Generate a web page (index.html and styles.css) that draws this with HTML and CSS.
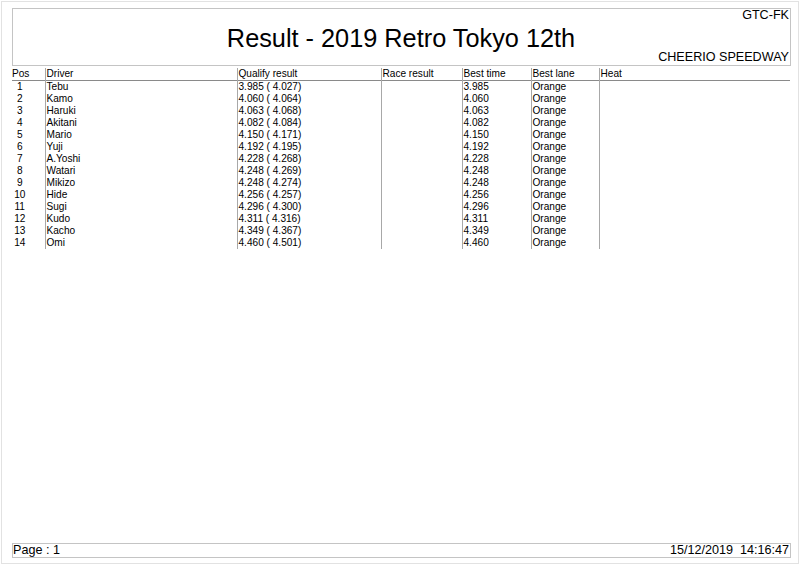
FILE: index.html
```html
<!DOCTYPE html>
<html>
<head>
<meta charset="utf-8">
<title>Result - 2019 Retro Tokyo 12th</title>
<link rel="stylesheet" href="styles.css">
</head>
<body>
<div class="page">
  <header class="head">
    <div class="code">GTC-FK</div>
    <h1 class="title">Result - 2019 Retro Tokyo 12th</h1>
    <div class="venue">CHEERIO SPEEDWAY</div>
  </header>
  <table class="results">
    <colgroup>
      <col class="c-pos"><col class="c-drv"><col class="c-qual"><col class="c-race"><col class="c-best"><col class="c-lane"><col class="c-heat">
    </colgroup>
    <thead>
      <tr><th class="pos-h">Pos</th><th>Driver</th><th>Qualify result</th><th>Race result</th><th>Best time</th><th>Best lane</th><th>Heat</th></tr>
    </thead>
    <tbody>
      <tr><td class="pos">1</td><td>Tebu</td><td>3.985 ( 4.027)</td><td></td><td>3.985</td><td>Orange</td><td></td></tr>
      <tr><td class="pos">2</td><td>Kamo</td><td>4.060 ( 4.064)</td><td></td><td>4.060</td><td>Orange</td><td></td></tr>
      <tr><td class="pos">3</td><td>Haruki</td><td>4.063 ( 4.068)</td><td></td><td>4.063</td><td>Orange</td><td></td></tr>
      <tr><td class="pos">4</td><td>Akitani</td><td>4.082 ( 4.084)</td><td></td><td>4.082</td><td>Orange</td><td></td></tr>
      <tr><td class="pos">5</td><td>Mario</td><td>4.150 ( 4.171)</td><td></td><td>4.150</td><td>Orange</td><td></td></tr>
      <tr><td class="pos">6</td><td>Yuji</td><td>4.192 ( 4.195)</td><td></td><td>4.192</td><td>Orange</td><td></td></tr>
      <tr><td class="pos">7</td><td>A.Yoshi</td><td>4.228 ( 4.268)</td><td></td><td>4.228</td><td>Orange</td><td></td></tr>
      <tr><td class="pos">8</td><td>Watari</td><td>4.248 ( 4.269)</td><td></td><td>4.248</td><td>Orange</td><td></td></tr>
      <tr><td class="pos">9</td><td>Mikizo</td><td>4.248 ( 4.274)</td><td></td><td>4.248</td><td>Orange</td><td></td></tr>
      <tr><td class="pos">10</td><td>Hide</td><td>4.256 ( 4.257)</td><td></td><td>4.256</td><td>Orange</td><td></td></tr>
      <tr><td class="pos">11</td><td>Sugi</td><td>4.296 ( 4.300)</td><td></td><td>4.296</td><td>Orange</td><td></td></tr>
      <tr><td class="pos">12</td><td>Kudo</td><td>4.311 ( 4.316)</td><td></td><td>4.311</td><td>Orange</td><td></td></tr>
      <tr><td class="pos">13</td><td>Kacho</td><td>4.349 ( 4.367)</td><td></td><td>4.349</td><td>Orange</td><td></td></tr>
      <tr><td class="pos">14</td><td>Omi</td><td>4.460 ( 4.501)</td><td></td><td>4.460</td><td>Orange</td><td></td></tr>
    </tbody>
  </table>
  <footer class="foot">
    <span>Page : 1</span>
    <span>15/12/2019&nbsp;&nbsp;14:16:47</span>
  </footer>
</div>
</body>
</html>
```
FILE: styles.css
```css
html, body {
  margin: 0;
  padding: 0;
  background: #fff;
}
body {
  font-family: "Liberation Sans", Arial, sans-serif;
  color: #000;
}
.page {
  box-sizing: border-box;
  margin: 1px 0 0 1px;
  width: 798px;
  height: 563px;
  border: 1px solid #e2e2e2;
  padding: 6px 0 5px 10px;
  display: flex;
  flex-direction: column;
}
.head {
  box-sizing: border-box;
  width: 779px;
  height: 58px;
  border: 1px solid #c4c4c4;
  padding: 0 1px 0 0;
  display: flex;
  flex-direction: column;
}
.code {
  font-size: 12.6px;
  line-height: 12px;
  text-align: right;
}
.title {
  margin: 5px 0 0;
  font-size: 25.3px;
  line-height: 25px;
  font-weight: normal;
  text-align: center;
}
.venue {
  font-size: 12.6px;
  line-height: 13px;
  text-align: right;
}
.results {
  margin-top: 2px;
  width: 778px;
  border-collapse: collapse;
  table-layout: fixed;
  font-size: 10.1px;
}
.c-pos { width: 33px; }
.c-drv { width: 192px; }
.c-qual { width: 144px; }
.c-race { width: 81px; }
.c-best { width: 69px; }
.c-lane { width: 68px; }
.c-heat { width: 191px; }
.results th, .results td {
  padding: 0 0 0 1px;
  height: 12px;
  line-height: 12px;
  text-align: left;
  font-weight: normal;
  white-space: nowrap;
  overflow: hidden;
  border-left: 1px solid #a8a8a8;
}
.results th:first-child, .results td:first-child {
  border-left: none;
}
.results thead tr {
  border-bottom: 1px solid #8a8a8a;
}
.results th.pos-h {
  padding-left: 0;
}
.results td.pos {
  padding: 0 17px 0 0;
  text-align: center;
}
.foot {
  margin-top: auto;
  box-sizing: border-box;
  width: 779px;
  height: 15px;
  border: 1px solid #c4c4c4;
  padding: 0 1px 0 0;
  display: flex;
  justify-content: space-between;
  font-size: 12.6px;
  line-height: 13px;
}
```
